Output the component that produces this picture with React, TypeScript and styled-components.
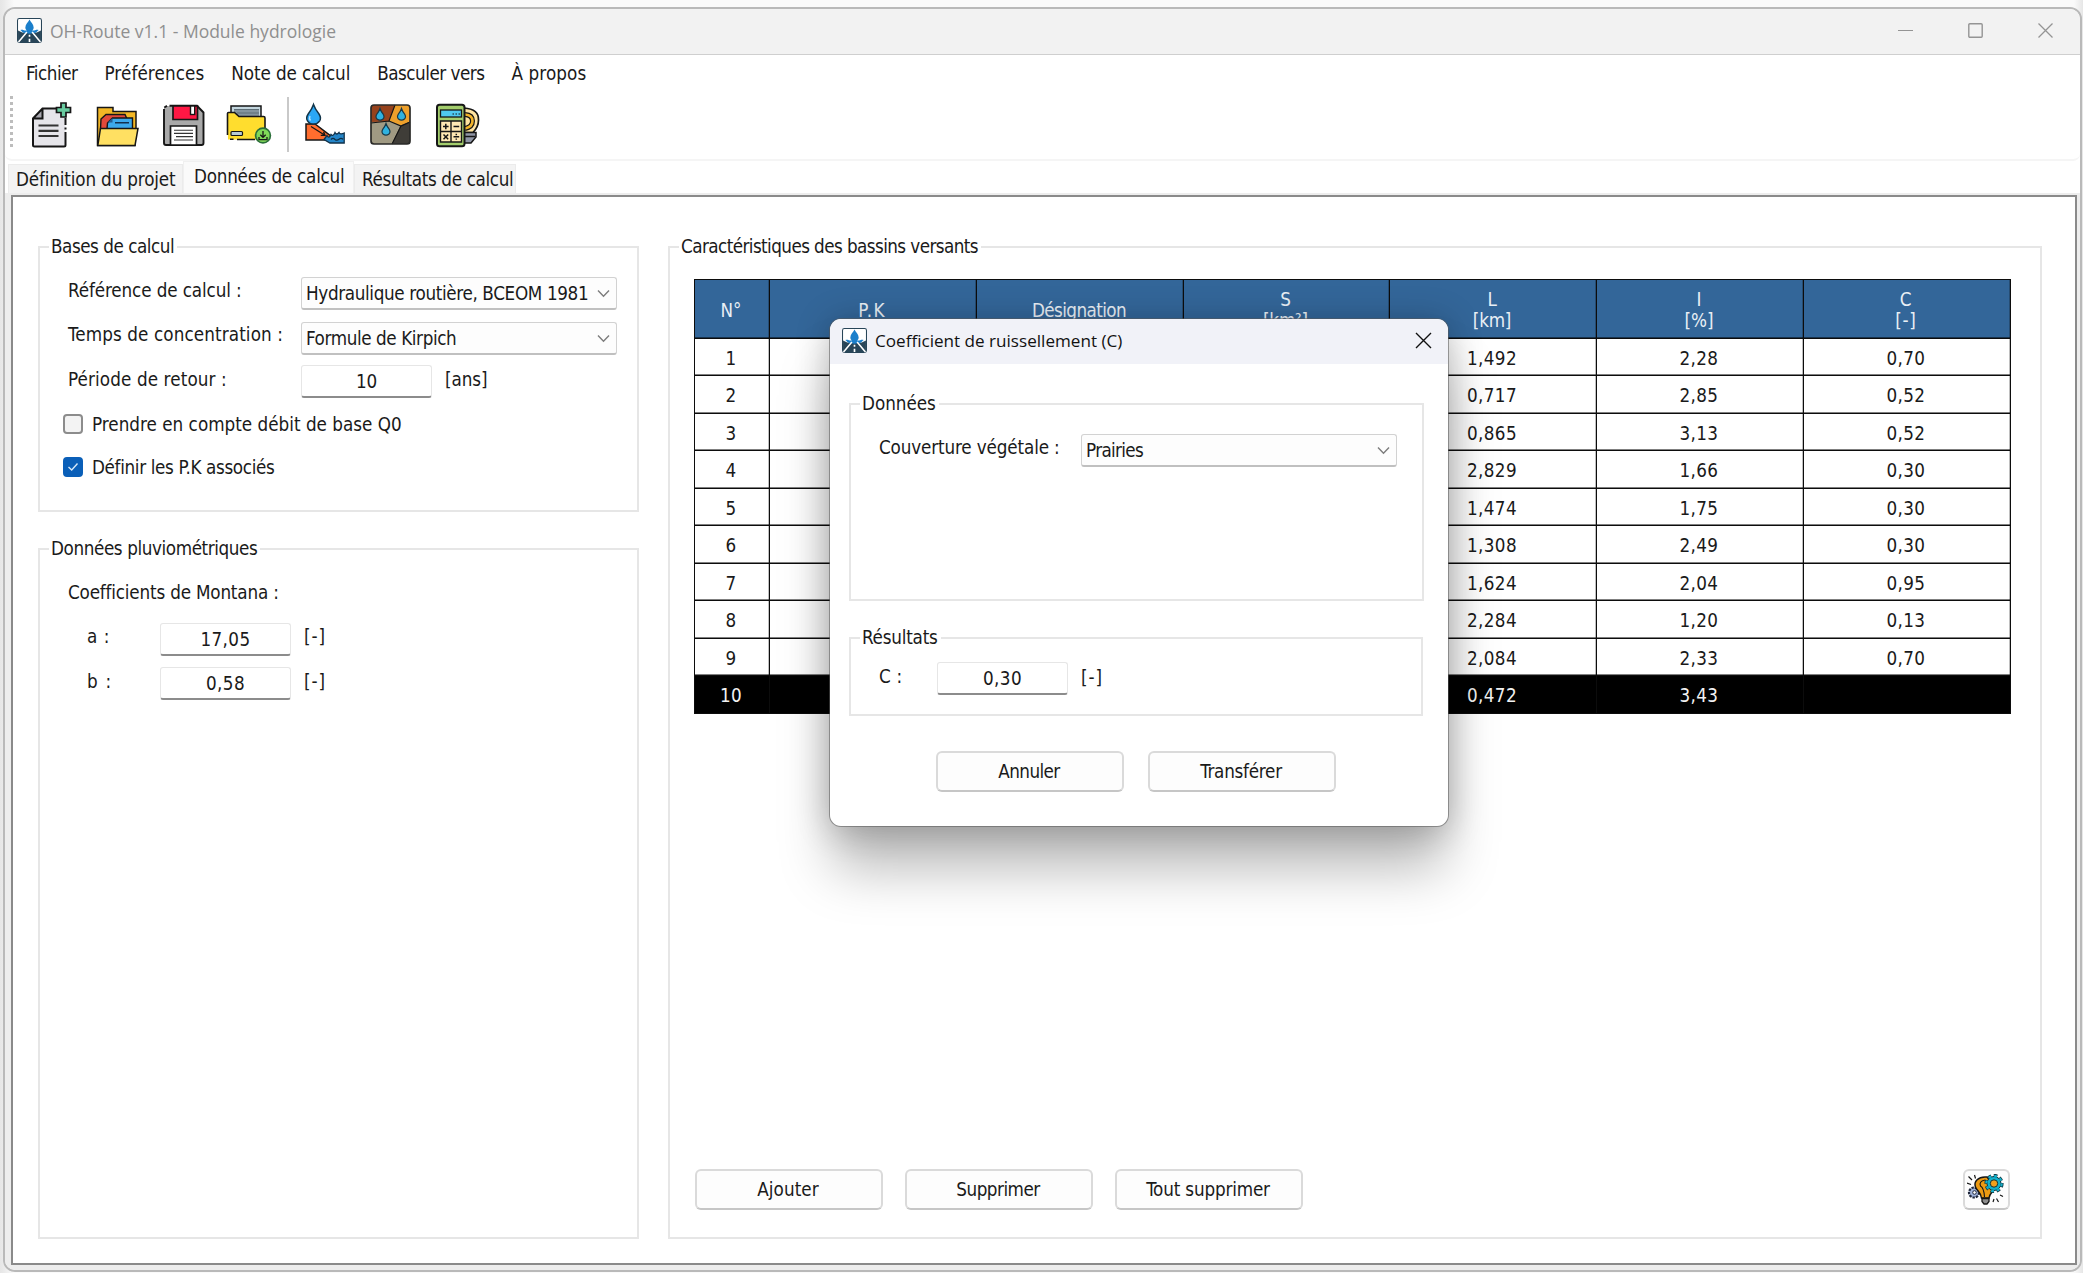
import React from 'react';
import styled, { createGlobalStyle, css } from 'styled-components';

const uiFont = '"DejaVu Sans Condensed", "DejaVu Sans", sans-serif';
const captionFont = '"Open Sans", "Noto Sans", sans-serif';

const GlobalStyle = createGlobalStyle`
  * { box-sizing: border-box; }
  body {
    margin: 0;
    background: #f4f4f4;
    font-family: ${uiFont};
    font-size: 18.7px;
    line-height: 22px;
    color: #1a1a1a;
  }
  button, input { font: inherit; color: inherit; }
`;

const Desktop = styled.div`
  width: 2083px;
  height: 1273px;
  padding: 7px 1px 1px 3px;
  background: linear-gradient(90deg, #e6e6e6 0, #e9e9e9 3px, #fafafa 14px, #fafafa 2074px, #e6e6e6 2083px);
  overflow: hidden;
`;

const Window = styled.main`
  position: relative;
  display: flex;
  flex-direction: column;
  width: 100%;
  height: 1265px;
  border: 2px solid #b9b9b9;
  border-radius: 12px;
  background: #fff;
  overflow: hidden;
`;

const TitleBar = styled.header`
  display: flex;
  align-items: center;
  flex: none;
  height: 46px;
  padding: 0 0 2px 12px;
  border-bottom: 1px solid #cfcfcf;
  background: #f2f2f2;
`;

const Caption = styled.h1<{ $muted?: boolean }>`
  flex: 1;
  margin: 0 0 0 8px;
  font-family: ${captionFont};
  font-weight: 400;
  font-size: ${(p) => (p.$muted ? '17.5px' : '17.1px')};
  line-height: 24px;
  color: ${(p) => (p.$muted ? '#8f8f8f' : '#111')};
`;

const WindowControls = styled.div`
  display: flex;
  gap: 55px;
  padding-right: 27px;
  svg { display: block; }
`;

const MenuBar = styled.nav`
  display: flex;
  flex: none;
  gap: 27px;
  height: 35px;
  padding: 8px 0 0 21px;
`;

const Text = styled.span<{ $track?: number }>`
  display: block;
  white-space: nowrap;
  letter-spacing: ${(p) => p.$track ?? 0}px;
`;

const ToolBar = styled.div`
  display: flex;
  flex: none;
  align-items: flex-start;
  height: 71px;
  padding: 6px 0 0 5px;
  border-bottom: 2px solid #f5f5f5;
  border-radius: 0 0 7px 7px;
`;

const Grip = styled.div`
  width: 3px;
  height: 51px;
  margin-right: 17px;
  background: repeating-linear-gradient(180deg, #bdbdbd 0, #bdbdbd 3px, transparent 3px, transparent 6px);
`;

const ToolGroup = styled.div<{ $gap: number }>`
  display: flex;
  gap: ${(p) => p.$gap}px;
  padding-top: 5px;
`;

const ToolSeparator = styled.div`
  width: 2px;
  height: 55px;
  margin: 1px 12px 0 14px;
  background: #c9c9c9;
`;

const TabStrip = styled.div`
  display: flex;
  flex: none;
  align-items: flex-end;
  height: 32px;
  padding-left: 3px;
`;

const Tab = styled.div<{ $active?: boolean; $width: number }>`
  width: ${(p) => p.$width}px;
  height: ${(p) => (p.$active ? 32 : 29)}px;
  padding: ${(p) => (p.$active ? '4px 0 0 10px' : '4px 0 0 7px')};
  border: 2px solid ${(p) => (p.$active ? '#f0f0f0' : '#ebebeb')};
  border-width: 1px 1px 0;
  background: ${(p) => (p.$active ? '#fafafa' : '#f3f3f3')};
`;

const TabBody = styled.div`
  display: flex;
  flex: 1;
  padding: 2px 4px 5px 6px;
  background: #ededed;
`;

const Pane = styled.div`
  display: flex;
  flex: 1;
  gap: 29px;
  padding: 39px 33px 0 25px;
  border: 2px solid #8a8a8a;
  background: #fff;
`;

const Column = styled.div`
  display: flex;
  flex-direction: column;
  gap: 26px;
  width: 601px;
`;

const Group = styled.fieldset<{ $height: number; $top: number; $width?: number }>`
  flex: none;
  min-width: 0;
  width: ${(p) => (p.$width ? `${p.$width}px` : 'auto')};
  height: ${(p) => p.$height}px;
  margin: 0;
  padding: ${(p) => p.$top}px 0 0 28px;
  border: 2px solid #e6e6e6;
`;

const GroupTitle = styled.legend<{ $track: number }>`
  margin-left: -19px;
  padding: 0 3px 0 2px;
  letter-spacing: ${(p) => p.$track}px;
  white-space: nowrap;
`;

const Basins = styled(Group)`
  flex: 1;
`;

const BasinsLayout = styled.div`
  display: flex;
  flex-direction: column;
  height: 100%;
  padding: 0 29px 27px 0;
  margin-left: -4px;
`;

const Row = styled.div<{ $height: number }>`
  display: flex;
  align-items: flex-start;
  height: ${(p) => p.$height}px;
`;

const Label = styled(Text)<{ $width: number; $drop?: number; $indent?: number }>`
  width: ${(p) => p.$width}px;
  padding-left: ${(p) => p.$indent ?? 0}px;
  margin-top: ${(p) => p.$drop ?? 0}px;
`;

const Unit = styled(Text)<{ $drop: number }>`
  margin: ${(p) => p.$drop}px 0 0 13px;
`;

const Combo = styled.div`
  display: flex;
  align-items: center;
  justify-content: space-between;
  width: 316px;
  height: 33px;
  padding: 1px 6px 0 4px;
  border: 1px solid #d2d2d2;
  border-bottom: 2px solid #c0c0c0;
  border-radius: 3px;
  background: #fdfdfd;
`;

const NumberField = styled.input<{ $track: number }>`
  width: 131px;
  height: 33px;
  padding: 1px 0 0;
  border: 1px solid #e6e6e6;
  border-bottom: 2px solid #8c8c8c;
  border-radius: 3px;
  background: #fff;
  outline: none;
  text-align: center;
  letter-spacing: ${(p) => p.$track}px;
`;

const CheckRow = styled.label<{ $height: number }>`
  display: flex;
  align-items: flex-start;
  gap: 9px;
  height: ${(p) => p.$height}px;
  margin-left: -5px;
`;

const CheckBox = styled.span<{ $checked?: boolean }>`
  display: flex;
  align-items: center;
  justify-content: center;
  width: 20px;
  height: 20px;
  border: 2px solid ${(p) => (p.$checked ? '#0a5fb8' : '#8c8c8c')};
  border-radius: 4px;
  background: ${(p) => (p.$checked ? '#0a5fb8' : '#f3f3f3')};
`;

const Grid = styled.div`
  width: 1317px;
  border: solid #0c0c0c;
  border-width: 1px 0 0 1px;
`;

const GridRow = styled.div<{ $kind?: 'head' | 'selected' }>`
  display: grid;
  grid-template-columns: 75px 207px 207px 206px 207px 207px 207px;
  height: ${(p) => (p.$kind === 'head' ? 58.5 : 37.5)}px;
  ${(p) =>
    p.$kind === 'head'
      ? css`background: #336699; color: #e9eff5;`
      : p.$kind === 'selected'
        ? css`background: #000; color: #f2f2f2;`
        : css`background: #fff;`}
`;

const Cell = styled.div<{ $track?: number }>`
  display: flex;
  align-items: center;
  justify-content: center;
  border: solid #0c0c0c;
  border-width: 0 1px 1px 0;
  box-shadow: inset 0 -1px 0 rgba(0, 0, 0, 0.5), inset -1px 0 0 rgba(0, 0, 0, 0.25);
  padding: 3px 2px 0 0;
  text-align: center;
  line-height: 21px;
  white-space: pre-line;
  letter-spacing: ${(p) => p.$track ?? 0.35}px;
`;

const ButtonBar = styled.div<{ $gap: number }>`
  display: flex;
  gap: ${(p) => p.$gap}px;
`;

const BasinActions = styled(ButtonBar)`
  padding: 0 1px 0 1px;
`;

const PushButton = styled.button<{ $track?: number; $compact?: boolean }>`
  display: flex;
  align-items: center;
  justify-content: center;
  width: ${(p) => (p.$compact ? 47 : 188)}px;
  height: 41px;
  padding: 1px 2px 0 0;
  border: 2px solid #dadada;
  border-bottom-color: #c6c6c6;
  border-radius: 6px;
  background: #fdfdfd;
  letter-spacing: ${(p) => p.$track ?? 0}px;
`;

const Spacer = styled.div`
  flex: 1;
`;

const Dialog = styled.section`
  position: absolute;
  left: 824px;
  top: 309px;
  width: 620px;
  height: 509px;
  display: flex;
  flex-direction: column;
  border: 1px solid rgba(90, 90, 90, 0.55);
  border-radius: 12px;
  background: #fff;
  background-clip: padding-box;
  box-shadow: 0 46px 54px -4px rgba(0, 0, 0, 0.27), 0 2px 34px rgba(0, 0, 0, 0.24);
`;

const DialogTitle = styled.header`
  display: flex;
  align-items: center;
  flex: none;
  height: 45px;
  padding: 0 16px 2px 12px;
  border-radius: 11px 11px 0 0;
  background: #f1f2f8;
  svg { display: block; }
`;

const DialogBody = styled.div`
  padding: 29px 0 0 19px;
`;

const DialogActions = styled(ButtonBar)`
  padding: 35px 0 0 87px;
`;

const Stack = styled.div`
  display: flex;
  flex-direction: column;
  gap: 26px;
`;

const AppIcon = () => (
  <svg width="25" height="25" viewBox="0 0 24 24">
    <rect x=".5" y=".5" width="23" height="23" rx="1.8" fill="#fff" stroke="#284558" />
    <path d="M1 12 L5 14 H19 L23 12 V23 H1 Z" fill="#284558" />
    <path d="M12 1.5 C13.2 4 16 6.2 16 9 C16 10.8 15 11.6 14.4 12 C17 12.4 18.6 10.6 20.8 11.6 C19.4 12.4 19 14.6 16.4 14.4 L12 15 L7.6 14.4 C5 14.6 4.6 12.4 3.2 11.6 C5.4 10.6 7 12.4 9.6 12 C9 11.6 8 10.8 8 9 C8 6.2 10.8 4 12 1.5Z" fill="#1b7fcb" />
    <path d="M9.5 13.5 L1.5 23 M14.5 13.5 L22.5 23" stroke="#fff" strokeWidth="1.5" fill="none" />
    <path d="M12 16 V18 M12 20 V23" stroke="#fff" strokeWidth="1.6" />
  </svg>
);

const Chevron = () => (
  <svg width="13" height="9" viewBox="0 0 13 9">
    <path d="M1 1.5 L6.5 7.3 L12 1.5" fill="none" stroke="#7d7d7d" strokeWidth="1.4" />
  </svg>
);

const ink = '#161616';

const NewFileIcon = () => (
  <svg width="48" height="48" viewBox="0 0 48 48">
    <path d="M12.5 7.5 H35.5 V45.5 H3 V17.5 Z" fill="#e6e5ea" />
    <path d="M12.5 7.5 L3 17.5 H12.5 Z" fill="#a9a8b0" />
    <path d="M30 7.5 H12.5 L3 17.5 V44 Q3 45.5 4.5 45.5 H34 Q35.5 45.5 35.5 44 V31 M35.5 28.5 V26.5 M35.5 24 V17 M12.5 8 V17.5 H3.5" fill="none" stroke={ink} strokeWidth="2" />
    <path d="M8.5 24.5 H28.5 M8.5 29.8 H28.5 M8.5 35 H28.5" stroke="#333" strokeWidth="2.2" />
    <path d="M31 2 H36 V6.5 H40.5 V11.5 H36 V16 H31 V11.5 H26.5 V6.5 H31 Z" fill="#68cba0" stroke={ink} strokeWidth="1.7" />
  </svg>
);

const OpenFolderIcon = () => (
  <svg width="48" height="48" viewBox="0 0 48 48">
    <path d="M2.5 6.5 H18 V10.5 H41 V26 L40 44.5 H2.5 Z" fill="#f3b725" stroke={ink} strokeWidth="1.5" />
    <path d="M6 18 L11 13.5 H30 L32 18 V28 H5.5 Z" fill="#e2483a" stroke={ink} strokeWidth="1.4" />
    <path d="M12.5 22 L17.5 17 H37.5 V28 H12 Z" fill="#3da9ea" stroke={ink} strokeWidth="1.4" />
    <path d="M12.5 21.5 L17.5 17 V21.5 Z" fill="#245e92" />
    <path d="M20 21.7 H34" stroke="#14304d" strokeWidth="1.5" />
    <path d="M5.5 27.5 H43 L40 44.5 H2.8 Z" fill="#ffe062" stroke={ink} strokeWidth="1.5" />
  </svg>
);

const SaveIcon = () => (
  <svg width="48" height="48" viewBox="0 0 48 48">
    <path d="M6 5 H37 L43.5 11.5 V43.5 H4 V7 Z" fill="#a9a9a9" />
    <path d="M9.5 4.8 H37 L43.5 11.5 V42 Q43.5 44 41.5 44 H6 Q4 44 4 42 V8 M4.3 6.5 L7 4.9" fill="none" stroke={ink} strokeWidth="1.9" />
    <path d="M13 5 H37.5 V18.5 H13 Z" fill="#ff1744" stroke={ink} strokeWidth="1.7" />
    <rect x="30.5" y="5" width="4.2" height="8.5" fill="#fff" stroke={ink} strokeWidth="1.4" />
    <path d="M10.5 25 H36.5 V44 H10.5 Z" fill="#fff" stroke={ink} strokeWidth="1.7" />
    <path d="M14 29.2 H33 M14 32.4 H33 M16 35.6 H33 M14 39 H33" stroke="#333" strokeWidth="1.1" />
  </svg>
);

const DownloadFolderIcon = () => (
  <svg width="48" height="48" viewBox="0 0 48 48">
    <path d="M6 12 V5 H36 V16 H6 Z" fill="#c3d6de" stroke={ink} strokeWidth="1.5" />
    <path d="M9 8.5 H34 V15 H13 L9 11 Z" fill="#84959e" />
    <path d="M9 8.5 H34 M12 12 H34" stroke="#5d6e77" strokeWidth="1.2" />
    <path d="M2.5 12 H9.5 L14 15.5 H40 V38.5 H3 Z" fill="#ffdd2e" />
    <path d="M2.5 34 V12.5 Q2.5 11.5 3.5 11.5 H9.5 L14 15.5 H38.5 Q40 15.5 40 17 V27 M12 38.5 H30 M5 38.3 H8.5" fill="none" stroke={ink} strokeWidth="1.6" />
    <rect x="6" y="30.5" width="11.5" height="4" rx="1" fill="#b8cbd4" stroke={ink} strokeWidth="1.2" />
    <circle cx="38" cy="34.5" r="7.4" fill="#7fd858" stroke="#2b6f3a" strokeWidth="1.7" />
    <path d="M38 30 V36 M35.3 33.8 L38 36.4 L40.7 33.8 M34 36 V38.6 H42 V36" fill="none" stroke={ink} strokeWidth="1.3" />
  </svg>
);

const RunoffIcon = () => (
  <svg width="48" height="48" viewBox="0 0 48 48">
    <path d="M5 23 H14 L30.5 35.5 L25 39 H5 Z" fill="#ff6d2e" stroke={ink} strokeWidth="1.5" />
    <path d="M23 38.5 L26 34.5 Q28 38 30 33.5 Q32 36 34 31.5 Q35.5 34.5 38 31.5 Q39 34 43.2 32 V42 H29 Z" fill="#2485c8" stroke="#12324a" strokeWidth="1.3" />
    <path d="M30 38.5 Q32 36.5 34 38.5 Q36 40 38 38.3 Q40 36.6 42 38.3" fill="none" stroke="#0e2c43" strokeWidth="1.2" />
    <path d="M12.5 3.5 Q14 8 18 13 Q20.5 17 18.7 19.8 Q16.5 23 12.5 23 Q8.5 23 6.5 19.8 Q4.6 17 7.2 13 Q11 8 12.5 3.5Z" fill="#2aa7f5" stroke="#123449" strokeWidth="1.5" />
    <path d="M9 15 Q7.8 17.5 9.5 19.5" fill="none" stroke="#b4e2ff" strokeWidth="1.4" />
    <path d="M10 25.5 L23.5 34 M19.8 34.3 H24 L22.6 30.7" fill="none" stroke={ink} strokeWidth="1.3" />
  </svg>
);

const SoilDrop = ({ x, y }: { x: number; y: number }) => (
  <path
    transform={`translate(${x} ${y})`}
    d="M0 -6 Q1 -3 3 -.6 Q5 2.4 3 4.6 Q0 6.8 -3 4.6 Q-5 2.4 -3 -.6 Q-1 -3 0 -6Z"
    fill="#2fb2e0"
    stroke="#173a4a"
    strokeWidth="1.2"
  />
);

const SoilIcon = () => (
  <svg width="48" height="48" viewBox="0 0 48 48">
    <rect x="4" y="4" width="39" height="39" rx="3" fill="#a09a83" />
    <path d="M4 7 Q4 4 7 4 H28 L22 20.5 L4 21 Z" fill="#96421c" />
    <path d="M28 4 H40 Q43 4 43 7 V21 L34 24.5 L22 20 Z" fill="#eda02b" />
    <path d="M33.5 24.5 L43 20.5 V40 Q43 43 40 43 H25 Z" fill="#3f3d38" />
    <path d="M28 4 L22 20 L4 22 M22 20 L34 25 L43 21 M34 25 L25 43" fill="none" stroke={ink} strokeWidth="1.2" />
    <rect x="4" y="4" width="39" height="39" rx="3" fill="none" stroke="#2a2a28" strokeWidth="1.7" />
    <SoilDrop x={13} y={13.5} />
    <SoilDrop x={34.5} y={13.5} />
    <SoilDrop x={19} y={28.5} />
  </svg>
);

const CalculatorIcon = () => (
  <svg width="50" height="48" viewBox="0 0 50 48">
    <path d="M31 7 Q46 8 45.5 19 Q45.5 26 40 31.5 H31 Z" fill="#ffe3a0" stroke={ink} strokeWidth="1.7" />
    <path d="M32 13.5 Q39.5 14 39.5 20 Q39.5 26 32 27.5" fill="none" stroke={ink} strokeWidth="5" />
    <path d="M32 13.5 Q39.5 14 39.5 20 Q39.5 26 32 27.5" fill="none" stroke="#f2b32a" strokeWidth="2.6" />
    <path d="M31 31.5 H43 V36 L38 42 H31 Z" fill="#8f95a5" stroke={ink} strokeWidth="1.5" />
    <path d="M31 35.5 H42" stroke={ink} strokeWidth="1.3" />
    <rect x="4" y="3.8" width="27.5" height="41.5" rx="2.5" fill="#a3cd6c" stroke={ink} strokeWidth="2" />
    <rect x="7.5" y="9" width="21" height="7" fill="#4fc8f0" stroke={ink} strokeWidth="1.3" />
    <path d="M19.5 13 H21 M22.5 13 H24 M25.5 13 H27" stroke={ink} strokeWidth="1.2" />
    <path d="M7.5 20 H28.5 V41 H7.5 Z" fill="#ffe9b4" stroke={ink} strokeWidth="1.4" />
    <path d="M18 20 V41 M7.5 30.5 H28.5" stroke={ink} strokeWidth="1.4" />
    <path d="M10 25.5 H15.6 M12.8 22.7 V28.3 M20.5 25.5 H26.2 M10.5 33.5 L15.2 38.2 M15.2 33.5 L10.5 38.2 M20.5 35.8 H26.2 M23.3 32.8 V34.2 M23.3 37.4 V38.8" stroke={ink} strokeWidth="1.5" />
  </svg>
);

const IdeaIcon = () => (
  <svg width="38" height="32" viewBox="0 0 38 32">
    <path d="M1.5 2.5 L5 6 M7.5 1 L8.5 4.5 M0 9 L4 10.5 M33 21 L36 22.5 M29.5 24.5 L31.5 28 M27 25 L26 28" stroke={ink} strokeWidth="1.2" />
    <circle cx="7" cy="18.5" r="5" fill="#9fb2da" stroke="#20283c" strokeWidth="2.2" strokeDasharray="2.4 1" />
    <circle cx="7.5" cy="18.5" r="1.8" fill="#fff" stroke="#20283c" />
    <path d="M20 3 C11 2 6.5 8 8.5 13 C10 17 14 18.5 14.5 24 H22 C22.5 19 27.5 17 28 13 Z" fill="#ec9a12" stroke={ink} strokeWidth="1.5" />
    <path d="M18 6 Q11.5 7.5 13.5 12 Q17 14 17.5 23" fill="none" stroke={ink} strokeWidth="1.1" />
    <path d="M15 24.5 H22 V27.5 L20 30 H17 L15 27.5 Z" fill="#8d8d8d" stroke={ink} strokeWidth="1.3" />
    <circle cx="27" cy="9.5" r="8" fill="none" stroke="#10323a" strokeWidth="3.2" strokeDasharray="3.6 2.6" />
    <circle cx="27" cy="9.5" r="7" fill="#12b1cd" stroke="#10323a" strokeWidth="1" />
    <circle cx="27" cy="9.5" r="7.7" fill="none" stroke="#12b1cd" strokeWidth="2.2" strokeDasharray="2.8 3.25" />
    <circle cx="27" cy="9.5" r="3.7" fill="#f3a01c" stroke="#10323a" strokeWidth="1" />
  </svg>
);

const columns: { title: string; track?: number }[] = [
  { title: 'N°', track: 0 },
  { title: 'P.K', track: 1.3 },
  { title: 'Désignation', track: -0.59 },
  { title: 'S\n[km²]', track: -0.2 },
  { title: 'L\n[km]', track: -0.2 },
  { title: 'I\n[%]', track: 0 },
  { title: 'C\n[-]', track: 0.7 },
];

const basins = [
  ['1,492', '2,28', '0,70'],
  ['0,717', '2,85', '0,52'],
  ['0,865', '3,13', '0,52'],
  ['2,829', '1,66', '0,30'],
  ['1,474', '1,75', '0,30'],
  ['1,308', '2,49', '0,30'],
  ['1,624', '2,04', '0,95'],
  ['2,284', '1,20', '0,13'],
  ['2,084', '2,33', '0,70'],
  ['0,472', '3,43', ''],
];

const BasinTable = () => (
  <Grid>
    <GridRow $kind="head">
      {columns.map((c) => (
        <Cell key={c.title} $track={c.track}>{c.title}</Cell>
      ))}
    </GridRow>
    {basins.map(([length, slope, runoff], i) => (
      <GridRow key={i} $kind={i === basins.length - 1 ? 'selected' : undefined}>
        <Cell>{i + 1}</Cell>
        <Cell />
        <Cell />
        <Cell />
        <Cell>{length}</Cell>
        <Cell>{slope}</Cell>
        <Cell>{runoff}</Cell>
      </GridRow>
    ))}
  </Grid>
);

const RunoffDialog = () => (
  <Dialog>
    <DialogTitle>
      <AppIcon />
      <Caption>Coefficient de ruissellement (C)</Caption>
      <svg width="17" height="17" viewBox="0 0 17 17">
        <path d="M1 1 L16 16 M16 1 L1 16" stroke="#111" strokeWidth="1.4" />
      </svg>
    </DialogTitle>
    <DialogBody>
      <Stack>
        <Group $height={208} $top={19} $width={575}>
          <GroupTitle $track={-0.04}>Données</GroupTitle>
          <Row $height={33}>
            <Label $width={202} $drop={3} $track={-0.14}>Couverture végétale :</Label>
            <Combo>
              <Text $track={-0.66}>Prairies</Text>
              <Chevron />
            </Combo>
          </Row>
        </Group>
        <Group $height={89} $top={13} $width={574}>
          <GroupTitle $track={-0.22}>Résultats</GroupTitle>
          <Row $height={33}>
            <Label $width={58} $drop={4} $track={0.21}>C :</Label>
            <NumberField $track={0.42} defaultValue="0,30" />
            <Unit $drop={5} $track={0.94}>[-]</Unit>
          </Row>
        </Group>
      </Stack>
      <DialogActions $gap={24}>
        <PushButton $track={-0.58}>Annuler</PushButton>
        <PushButton $track={-0.25}>Transférer</PushButton>
      </DialogActions>
    </DialogBody>
  </Dialog>
);

export default function App() {
  return (
    <Desktop>
      <GlobalStyle />
      <Window>
        <TitleBar>
          <AppIcon />
          <Caption $muted>OH-Route v1.1 - Module hydrologie</Caption>
          <WindowControls>
            <svg width="15" height="15" viewBox="0 0 15 15">
              <path d="M0 7.5 H15" stroke="#949494" strokeWidth="1.2" />
            </svg>
            <svg width="15" height="15" viewBox="0 0 15 15">
              <rect x=".8" y=".8" width="13.4" height="13.4" rx="1" fill="none" stroke="#949494" strokeWidth="1.4" />
            </svg>
            <svg width="15" height="15" viewBox="0 0 15 15">
              <path d="M.5 .5 L14.5 14.5 M14.5 .5 L.5 14.5" stroke="#949494" strokeWidth="1.3" />
            </svg>
          </WindowControls>
        </TitleBar>
        <MenuBar>
          <Text $track={-0.48}>Fichier</Text>
          <Text $track={0.1}>Préférences</Text>
          <Text $track={-0.1}>Note de calcul</Text>
          <Text $track={-0.5}>Basculer vers</Text>
          <Text $track={0.11}>À propos</Text>
        </MenuBar>
        <ToolBar>
          <Grip />
          <ToolGroup $gap={17}>
            <NewFileIcon />
            <OpenFolderIcon />
            <SaveIcon />
            <DownloadFolderIcon />
          </ToolGroup>
          <ToolSeparator />
          <ToolGroup $gap={18}>
            <RunoffIcon />
            <SoilIcon />
            <CalculatorIcon />
          </ToolGroup>
        </ToolBar>
        <TabStrip>
          <Tab $width={175}><Text $track={-0.15}>Définition du projet</Text></Tab>
          <Tab $width={171} $active><Text $track={-0.24}>Données de calcul</Text></Tab>
          <Tab $width={162}><Text $track={-0.35}>Résultats de calcul</Text></Tab>
        </TabStrip>
        <TabBody>
          <Pane>
            <Column>
              <Group $height={276} $top={19}>
                <GroupTitle $track={-0.47}>Bases de calcul</GroupTitle>
                <Row $height={45}>
                  <Label $width={233} $drop={3} $track={-0.12}>Référence de calcul :</Label>
                  <Combo>
                    <Text $track={-0.35}>Hydraulique routière, BCEOM 1981</Text>
                    <Chevron />
                  </Combo>
                </Row>
                <Row $height={43}>
                  <Label $width={233} $drop={2} $track={0.11}>Temps de concentration :</Label>
                  <Combo>
                    <Text $track={-0.4}>Formule de Kirpich</Text>
                    <Chevron />
                  </Combo>
                </Row>
                <Row $height={49}>
                  <Label $width={233} $drop={4} $track={0.11}>Période de retour :</Label>
                  <NumberField $track={-0.1} defaultValue="10" />
                  <Unit $drop={4} $track={-0.07}>[ans]</Unit>
                </Row>
                <CheckRow $height={43}>
                  <CheckBox />
                  <Text $track={0.01}>Prendre en compte débit de base Q0</Text>
                </CheckRow>
                <CheckRow $height={22}>
                  <CheckBox $checked>
                    <svg width="12" height="10" viewBox="0 0 12 10">
                      <path d="M1.5 5 L4.7 8 L10.5 1.5" fill="none" stroke="#d6e8f8" strokeWidth="1.4" />
                    </svg>
                  </CheckBox>
                  <Text $track={-0.34}>Définir les P.K associés</Text>
                </CheckRow>
              </Group>
              <Group $height={701} $top={22}>
                <GroupTitle $track={-0.4}>Données pluviométriques</GroupTitle>
                <Row $height={41}>
                  <Label $width={260} $track={-0.18}>Coefficients de Montana :</Label>
                </Row>
                <Row $height={44}>
                  <Label $width={92} $indent={19} $drop={3} $track={0.6}>a :</Label>
                  <NumberField $track={0.39} defaultValue="17,05" />
                  <Unit $drop={3} $track={0.94}>[-]</Unit>
                </Row>
                <Row $height={33}>
                  <Label $width={92} $indent={19} $drop={4} $track={1.2}>b :</Label>
                  <NumberField $track={0.42} defaultValue="0,58" />
                  <Unit $drop={4} $track={0.94}>[-]</Unit>
                </Row>
              </Group>
            </Column>
            <Basins $height={1003} $top={21}>
              <GroupTitle $track={-0.57}>Caractéristiques des bassins versants</GroupTitle>
              <BasinsLayout>
                <BasinTable />
                <Spacer />
                <BasinActions $gap={22}>
                  <PushButton $track={0.08}>Ajouter</PushButton>
                  <PushButton $track={-0.5}>Supprimer</PushButton>
                  <PushButton $track={-0.16}>Tout supprimer</PushButton>
                  <Spacer />
                  <PushButton $compact aria-label="Calculer"><IdeaIcon /></PushButton>
                </BasinActions>
              </BasinsLayout>
            </Basins>
          </Pane>
        </TabBody>
        <RunoffDialog />
      </Window>
    </Desktop>
  );
}
